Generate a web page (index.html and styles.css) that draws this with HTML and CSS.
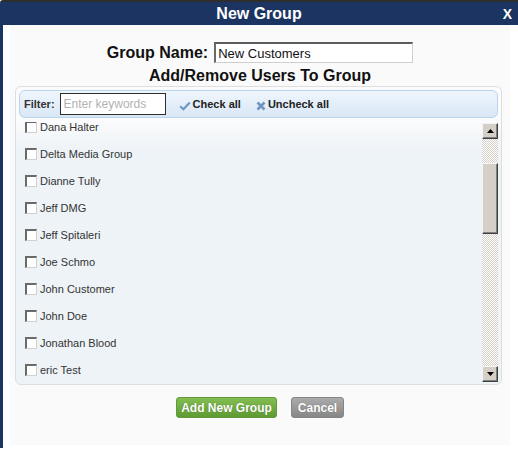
FILE: index.html
```html
<!DOCTYPE html>
<html lang="en">
<head>
    <meta charset="UTF-8">
    <meta name="viewport" content="width=device-width, initial-scale=1.0">
    <title>New Group</title>
    <link rel="stylesheet" href="styles.css">
</head>
<body>
    <div class="window">
        <div class="titlebar">
            <span></span>
            <span class="title">New Group</span>
            <span class="close">X</span>
        </div>

        <div class="frame">
            <div class="dialog">
                <div class="name-row">
                    <label class="name-label" for="groupName">Group Name:</label>
                    <input class="name-input" id="groupName" type="text" value="New Customers">
                </div>
                <div class="heading">Add/Remove Users To Group</div>

                <div class="panel">
                    <div class="toolbar">
                        <span class="filter-label">Filter:</span>
                        <input class="filter-input" type="text" placeholder="Enter keywords">
                        <a class="tool-link check-all">
                            <svg width="12" height="10" viewBox="0 0 12 10"><path d="M1.2 5.2 L4.4 8.2 L10.8 1.6" fill="none" stroke="#6b98c9" stroke-width="2.2"/></svg>
                            Check all
                        </a>
                        <a class="tool-link uncheck-all">
                            <svg width="10" height="10" viewBox="0 0 10 10"><path d="M1.5 1.5 L8.5 8.5 M8.5 1.5 L1.5 8.5" fill="none" stroke="#6f95c2" stroke-width="2.6"/></svg>
                            Uncheck all
                        </a>
                    </div>

                    <div class="list-wrap">
                        <!-- list is scrolled down a little -->
                        <ul class="users">
                            <li><input type="checkbox" class="cb"><span>Dana Halter</span></li>
                            <li><input type="checkbox" class="cb"><span>Delta Media Group</span></li>
                            <li><input type="checkbox" class="cb"><span>Dianne Tully</span></li>
                            <li><input type="checkbox" class="cb"><span>Jeff DMG</span></li>
                            <li><input type="checkbox" class="cb"><span>Jeff Spitaleri</span></li>
                            <li><input type="checkbox" class="cb"><span>Joe Schmo</span></li>
                            <li><input type="checkbox" class="cb"><span>John Customer</span></li>
                            <li><input type="checkbox" class="cb"><span>John Doe</span></li>
                            <li><input type="checkbox" class="cb"><span>Jonathan Blood</span></li>
                            <li><input type="checkbox" class="cb"><span>eric Test</span></li>
                        </ul>
                        <div class="scrollbar">
                            <div class="sb-btn">
                                <svg width="7" height="4" viewBox="0 0 7 4"><path d="M0 4 L3.5 0 L7 4 Z" fill="#000"/></svg>
                            </div>
                            <div class="sb-track sb-track-top"></div>
                            <div class="sb-thumb"></div>
                            <div class="sb-track sb-track-rest"></div>
                            <div class="sb-btn">
                                <svg width="7" height="4" viewBox="0 0 7 4"><path d="M0 0 L7 0 L3.5 4 Z" fill="#000"/></svg>
                            </div>
                        </div>
                    </div>
                </div>

                <div class="actions">
                    <button class="btn btn-green">Add New Group</button>
                    <button class="btn btn-gray">Cancel</button>
                </div>
            </div>
        </div>
    </div>
</body>
</html>
```

FILE: styles.css
```css
body {
    margin: 0;
    background-color: #fff;
    font-family: "Liberation Sans", Arial, sans-serif;
    color: #222;
}
.window {
    width: 518px;
    height: 448px;
}
.titlebar {
    display: grid;
    grid-template-columns: 1fr auto 1fr;
    align-items: center;
    height: 23px;
    border-top: 2px solid #2e2e2e;
    border-top-left-radius: 3px;
    background-color: #1c3462;
    color: #fff;
}
.title {
    font-size: 16px;
    font-weight: bold;
    line-height: 18px;
}
.close {
    justify-self: end;
    padding-right: 6px;
    font-size: 14px;
    font-weight: bold;
}
.frame {
    height: 423px;
    border-left: 3px solid #1c3462;
    padding: 0 8px 0 7px;
    background-color: #fff;
}
.dialog {
    height: 420px;
    background-color: #fafafa;
    padding-top: 17px;
    box-sizing: border-box;
}

.name-row {
    display: flex;
    align-items: center;
    justify-content: center;
    gap: 6px;
}
.name-label {
    font-size: 16px;
    font-weight: bold;
    line-height: 18px;
    color: #111;
}
.name-input {
    width: 199px;
    height: 21px;
    box-sizing: border-box;
    margin: 0;
    padding: 0 2px;
    border-style: solid;
    border-width: 2px 1px 1px 2px;
    border-color: #5c5c5c #cfcfcf #cfcfcf #6a6a6a;
    background-color: #fff;
    font-family: "Liberation Sans", Arial, sans-serif;
    font-size: 13px;
    color: #111;
    outline: none;
}
.heading {
    margin-top: 4px;
    text-align: center;
    font-size: 16px;
    font-weight: bold;
    line-height: 18px;
    color: #111;
}

.panel {
    width: 487px;
    height: 299px;
    box-sizing: border-box;
    margin: 1px 0 0 5px;
    padding: 3px 3px 1px;
    border: 1px solid #dedede;
    border-radius: 6px;
    background: linear-gradient(#fcfcfd 0, #fafbfc 36px, #eef3f7 62px, #eef3f7);
}
.toolbar {
    display: flex;
    align-items: center;
    height: 28px;
    box-sizing: border-box;
    padding-left: 4px;
    border: 1px solid #b9d4ec;
    border-radius: 6px;
    background: linear-gradient(#eff6fd, #d9e7f5);
    font-size: 11px;
    font-weight: bold;
    color: #222;
}
.filter-label {
    color: #333;
}
.filter-input {
    width: 106px;
    height: 22px;
    box-sizing: border-box;
    margin: 0 0 0 5px;
    padding: 0 3px;
    border: 1px solid #2e2e2e;
    background-color: #fff;
    font-family: "Liberation Sans", Arial, sans-serif;
    font-size: 12px;
    outline: none;
}
.filter-input::placeholder {
    color: #b2b2b2;
}
.tool-link {
    display: flex;
    align-items: center;
    gap: 2px;
    cursor: pointer;
}
.tool-link svg {
    margin-top: 3px;
}
.check-all {
    margin-left: 13px;
}
.uncheck-all {
    margin-left: 15px;
}

.list-wrap {
    display: flex;
    height: 261px;
    margin-top: 4px;
    overflow: hidden;
}
.users {
    flex: 1;
    list-style: none;
    margin: -9px 0 0;
    padding: 0 0 0 6px;
}
.users li {
    display: flex;
    align-items: center;
    gap: 3px;
    height: 27px;
    font-size: 11px;
    color: #333;
}
.cb {
    appearance: none;
    width: 12px;
    height: 12px;
    box-sizing: border-box;
    margin: 0;
    border-style: solid;
    border-width: 2px 1px 1px 2px;
    border-color: #6a6a6a #d0d0d0 #d0d0d0 #6a6a6a;
    background-color: #fff;
}

.scrollbar {
    display: flex;
    flex-direction: column;
    width: 16px;
    margin: 1px 0 1px;
}
.sb-btn, .sb-thumb {
    box-sizing: border-box;
    border: 1px solid;
    border-color: #f4f4f4 #404040 #404040 #f4f4f4;
    box-shadow: inset -1px -1px #808080;
    background-color: #d4d0c8;
}
.sb-btn {
    display: flex;
    align-items: center;
    justify-content: center;
    height: 16px;
}
.sb-thumb {
    height: 71px;
}
.sb-track {
    background: repeating-conic-gradient(#d4d0c8 0 25%, #fff 0 50%) 0 0 / 2px 2px;
}
.sb-track-top {
    height: 24px;
}
.sb-track-rest {
    flex: 1;
}

.actions {
    display: flex;
    justify-content: center;
    gap: 14px;
    margin-top: 12px;
}
.btn {
    height: 21px;
    box-sizing: border-box;
    padding: 0;
    border-radius: 3px;
    white-space: nowrap;
    font-family: "Liberation Sans", Arial, sans-serif;
    font-size: 12px;
    font-weight: bold;
    color: #fff;
    text-shadow: 0 0 1px rgba(0, 0, 0, 0.35);
    cursor: pointer;
}
.btn-green {
    width: 101px;
    border: 1px solid #62993a;
    background: linear-gradient(#84be52, #5d9a32);
}
.btn-gray {
    width: 53px;
    border: 1px solid #858585;
    background: linear-gradient(#ababab, #878787);
}
```
